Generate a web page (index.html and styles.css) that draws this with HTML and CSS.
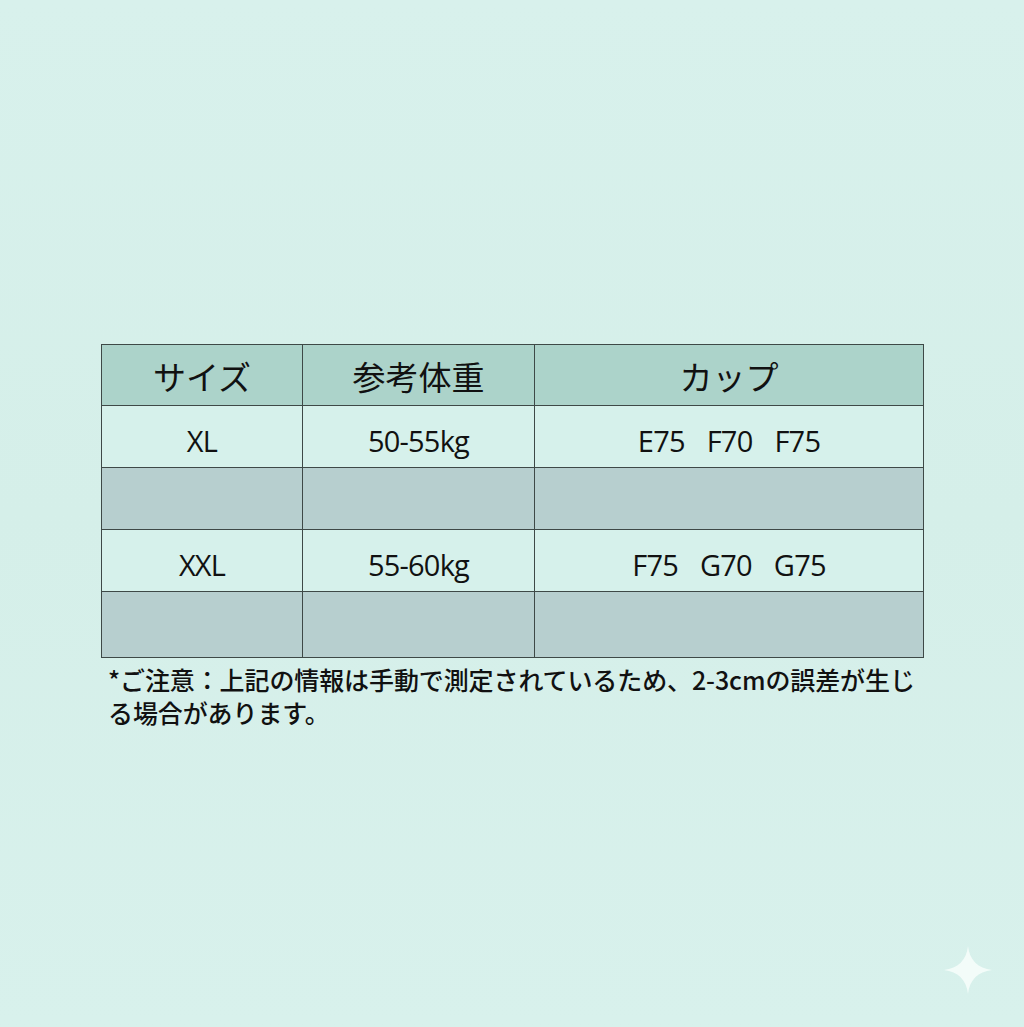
FILE: index.html
```html
<!DOCTYPE html>
<html lang="ja">
<head>
<meta charset="utf-8">
<link rel="stylesheet" href="styles.css">
</head>
<body>
<main class="page">
  <table class="size-table">
    <colgroup>
      <col class="c1"><col class="c2"><col class="c3">
    </colgroup>
    <thead>
      <tr class="head"><th>サイズ</th><th>参考体重</th><th>カップ</th></tr>
    </thead>
    <tbody>
      <tr class="light"><td>XL</td><td>50-55kg</td><td class="cups">E75&nbsp;&nbsp;&nbsp;F70&nbsp;&nbsp;&nbsp;F75</td></tr>
      <tr class="gray"><td></td><td></td><td></td></tr>
      <tr class="light"><td>XXL</td><td>55-60kg</td><td class="cups">F75&nbsp;&nbsp;&nbsp;G70&nbsp;&nbsp;&nbsp;G75</td></tr>
      <tr class="gray tall"><td></td><td></td><td></td></tr>
    </tbody>
  </table>
  <p class="note">*ご注意：上記の情報は手動で測定されているため、2-3cmの誤差が生じ<br>る場合があります。</p>
</main>
<svg class="sparkle" viewBox="0 0 48 48" width="48" height="48" aria-hidden="true">
  <path d="M24 0 C25.5 14 34 22.5 48 24 C34 25.5 25.5 34 24 48 C22.5 34 14 25.5 0 24 C14 22.5 22.5 14 24 0 Z" fill="#f3fcf9"/>
</svg>
</body>
</html>
```
FILE: styles.css
```css
html, body {
  margin: 0;
  padding: 0;
}
body {
  width: 1024px;
  height: 1027px;
  background: linear-gradient(180deg, #d8f1ec 0%, #d5efe9 50%, #d8f1ec 100%);
  font-family: "Noto Sans CJK JP", "Noto Sans", sans-serif;
  color: #111;
  position: relative;
  overflow: hidden;
}
.page {
  padding: 344px 0 0 101px;
}
.size-table {
  border-collapse: collapse;
  width: 822px;
  table-layout: fixed;
}
.c1 { width: 201px; }
.c2 { width: 232px; }
.c3 { width: 389px; }
.size-table th,
.size-table td {
  border: 1px solid #3e4947;
  text-align: center;
  padding: 0;
  height: 62px;
  box-sizing: border-box;
}
.size-table th {
  height: 61px;
  font-size: 33px;
  font-weight: 400;
  line-height: 1;
  padding-top: 3px;
}
.size-table td {
  font-family: "Open Sans", "Noto Sans CJK JP", sans-serif;
  font-size: 29px;
  font-weight: 500;
  letter-spacing: -0.8px;
  line-height: 1;
  padding-top: 8px;
}
.size-table td.cups {
  word-spacing: 0.6px;
}
.head { background: #acd3ca; }
.light { background: #d6f1eb; }
.gray { background: #b7cfcf; }
.size-table tr.tall td { height: 66px; }
.note {
  margin: 5px 0 0 7px;
  width: 830px;
  font-size: 25px;
  line-height: 33px;
  letter-spacing: -0.1px;
  font-weight: 500;
  color: #111;
}
.sparkle {
  position: absolute;
  left: 944px;
  top: 946px;
}
```
